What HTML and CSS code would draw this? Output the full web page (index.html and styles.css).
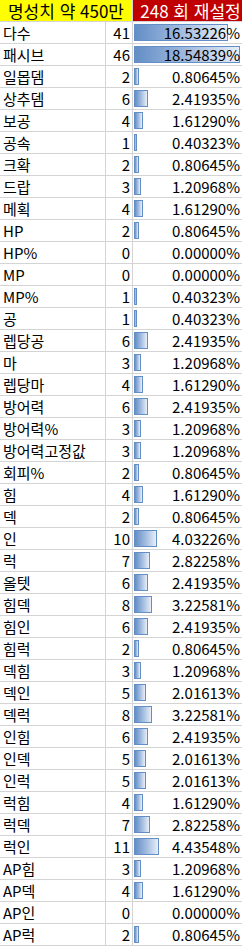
FILE: index.html
```html
<!DOCTYPE html>
<html lang="ko">
<head>
<meta charset="utf-8">
<title>명성치 재설정</title>
<link rel="stylesheet" href="styles.css">
</head>
<body>
<div class="sheet">
  <div class="hd hd-yellow">명성치 약 450만</div>
  <div class="hd hd-red">248 회 재설정</div>

  <div class="lbl">다수</div><div class="num">41</div><div class="pct"><span class="bar" style="width:94px"></span><span class="val">16.53226%</span></div>
  <div class="lbl">패시브</div><div class="num">46</div><div class="pct"><span class="bar" style="width:106px"></span><span class="val">18.54839%</span></div>
  <div class="lbl">일몹뎀</div><div class="num">2</div><div class="pct"><span class="bar" style="width:5px"></span><span class="val">0.80645%</span></div>
  <div class="lbl">상추뎀</div><div class="num">6</div><div class="pct"><span class="bar" style="width:14px"></span><span class="val">2.41935%</span></div>
  <div class="lbl">보공</div><div class="num">4</div><div class="pct"><span class="bar" style="width:9px"></span><span class="val">1.61290%</span></div>
  <div class="lbl">공속</div><div class="num">1</div><div class="pct"><span class="bar" style="width:3px"></span><span class="val">0.40323%</span></div>
  <div class="lbl">크확</div><div class="num">2</div><div class="pct"><span class="bar" style="width:5px"></span><span class="val">0.80645%</span></div>
  <div class="lbl">드랍</div><div class="num">3</div><div class="pct"><span class="bar" style="width:7px"></span><span class="val">1.20968%</span></div>
  <div class="lbl">메획</div><div class="num">4</div><div class="pct"><span class="bar" style="width:9px"></span><span class="val">1.61290%</span></div>
  <div class="lbl">HP</div><div class="num">2</div><div class="pct"><span class="bar" style="width:5px"></span><span class="val">0.80645%</span></div>
  <div class="lbl">HP%</div><div class="num">0</div><div class="pct"><span class="val">0.00000%</span></div>
  <div class="lbl">MP</div><div class="num">0</div><div class="pct"><span class="val">0.00000%</span></div>
  <div class="lbl">MP%</div><div class="num">1</div><div class="pct"><span class="bar" style="width:3px"></span><span class="val">0.40323%</span></div>
  <div class="lbl">공</div><div class="num">1</div><div class="pct"><span class="bar" style="width:3px"></span><span class="val">0.40323%</span></div>
  <div class="lbl">렙당공</div><div class="num">6</div><div class="pct"><span class="bar" style="width:14px"></span><span class="val">2.41935%</span></div>
  <div class="lbl">마</div><div class="num">3</div><div class="pct"><span class="bar" style="width:7px"></span><span class="val">1.20968%</span></div>
  <div class="lbl">렙당마</div><div class="num">4</div><div class="pct"><span class="bar" style="width:9px"></span><span class="val">1.61290%</span></div>
  <div class="lbl">방어력</div><div class="num">6</div><div class="pct"><span class="bar" style="width:14px"></span><span class="val">2.41935%</span></div>
  <div class="lbl">방어력%</div><div class="num">3</div><div class="pct"><span class="bar" style="width:7px"></span><span class="val">1.20968%</span></div>
  <div class="lbl">방어력고정값</div><div class="num">3</div><div class="pct"><span class="bar" style="width:7px"></span><span class="val">1.20968%</span></div>
  <div class="lbl">회피%</div><div class="num">2</div><div class="pct"><span class="bar" style="width:5px"></span><span class="val">0.80645%</span></div>
  <div class="lbl">힘</div><div class="num">4</div><div class="pct"><span class="bar" style="width:9px"></span><span class="val">1.61290%</span></div>
  <div class="lbl">덱</div><div class="num">2</div><div class="pct"><span class="bar" style="width:5px"></span><span class="val">0.80645%</span></div>
  <div class="lbl">인</div><div class="num">10</div><div class="pct"><span class="bar" style="width:23px"></span><span class="val">4.03226%</span></div>
  <div class="lbl">럭</div><div class="num">7</div><div class="pct"><span class="bar" style="width:16px"></span><span class="val">2.82258%</span></div>
  <div class="lbl">올텟</div><div class="num">6</div><div class="pct"><span class="bar" style="width:14px"></span><span class="val">2.41935%</span></div>
  <div class="lbl">힘덱</div><div class="num">8</div><div class="pct"><span class="bar" style="width:18px"></span><span class="val">3.22581%</span></div>
  <div class="lbl">힘인</div><div class="num">6</div><div class="pct"><span class="bar" style="width:14px"></span><span class="val">2.41935%</span></div>
  <div class="lbl">힘럭</div><div class="num">2</div><div class="pct"><span class="bar" style="width:5px"></span><span class="val">0.80645%</span></div>
  <div class="lbl">덱힘</div><div class="num">3</div><div class="pct"><span class="bar" style="width:7px"></span><span class="val">1.20968%</span></div>
  <div class="lbl">덱인</div><div class="num">5</div><div class="pct"><span class="bar" style="width:12px"></span><span class="val">2.01613%</span></div>
  <div class="lbl">덱럭</div><div class="num">8</div><div class="pct"><span class="bar" style="width:18px"></span><span class="val">3.22581%</span></div>
  <div class="lbl">인힘</div><div class="num">6</div><div class="pct"><span class="bar" style="width:14px"></span><span class="val">2.41935%</span></div>
  <div class="lbl">인덱</div><div class="num">5</div><div class="pct"><span class="bar" style="width:12px"></span><span class="val">2.01613%</span></div>
  <div class="lbl">인럭</div><div class="num">5</div><div class="pct"><span class="bar" style="width:12px"></span><span class="val">2.01613%</span></div>
  <div class="lbl">럭힘</div><div class="num">4</div><div class="pct"><span class="bar" style="width:9px"></span><span class="val">1.61290%</span></div>
  <div class="lbl">럭덱</div><div class="num">7</div><div class="pct"><span class="bar" style="width:16px"></span><span class="val">2.82258%</span></div>
  <div class="lbl">럭인</div><div class="num">11</div><div class="pct"><span class="bar" style="width:25px"></span><span class="val">4.43548%</span></div>
  <div class="lbl">AP힘</div><div class="num">3</div><div class="pct"><span class="bar" style="width:7px"></span><span class="val">1.20968%</span></div>
  <div class="lbl">AP덱</div><div class="num">4</div><div class="pct"><span class="bar" style="width:9px"></span><span class="val">1.61290%</span></div>
  <div class="lbl">AP인</div><div class="num">0</div><div class="pct"><span class="val">0.00000%</span></div>
  <div class="lbl">AP럭</div><div class="num">2</div><div class="pct"><span class="bar" style="width:5px"></span><span class="val">0.80645%</span></div>
</div>
</body>
</html>
```

FILE: styles.css
```css
html, body {
  margin: 0;
  padding: 0;
  background: #ffffff;
}

.sheet {
  width: 242px;
  display: grid;
  grid-template-columns: 105px 26px 109px;
  grid-auto-rows: 21px;
  gap: 1px;
  background: #d4d4d4;
  padding-bottom: 1px;
  font-family: "Noto Sans CJK KR", "Noto Sans", sans-serif;
  font-size: 15px;
  line-height: 21px;
  color: #000000;
}

.sheet > div {
  background: #ffffff;
  white-space: nowrap;
}

.hd {
  font-size: 17px;
  line-height: 21px;
  text-align: center;
}

.hd-yellow {
  grid-column: span 2;
  background: #ffff00 !important;
  color: #000000;
}

.hd-red {
  background: #c00000 !important;
  color: #ffffff;
  padding-left: 6px;
}

.lbl {
  padding-left: 3px;
  overflow: hidden;
}

.num {
  text-align: right;
  padding-right: 2px;
}

.pct {
  display: grid;
  grid-template-columns: 1fr;
  grid-template-rows: 21px;
}

.bar {
  grid-area: 1 / 1;
  align-self: start;
  justify-self: start;
  box-sizing: border-box;
  height: 17px;
  margin-top: 2px;
  margin-left: 1px;
  border: 1px solid #638ec6;
  background: linear-gradient(to right, #638ec6 0%, #a8c0e2 55%, #e8eef8 100%);
}

.val {
  grid-area: 1 / 1;
  text-align: right;
  padding-right: 2px;
  position: relative;
}
```
